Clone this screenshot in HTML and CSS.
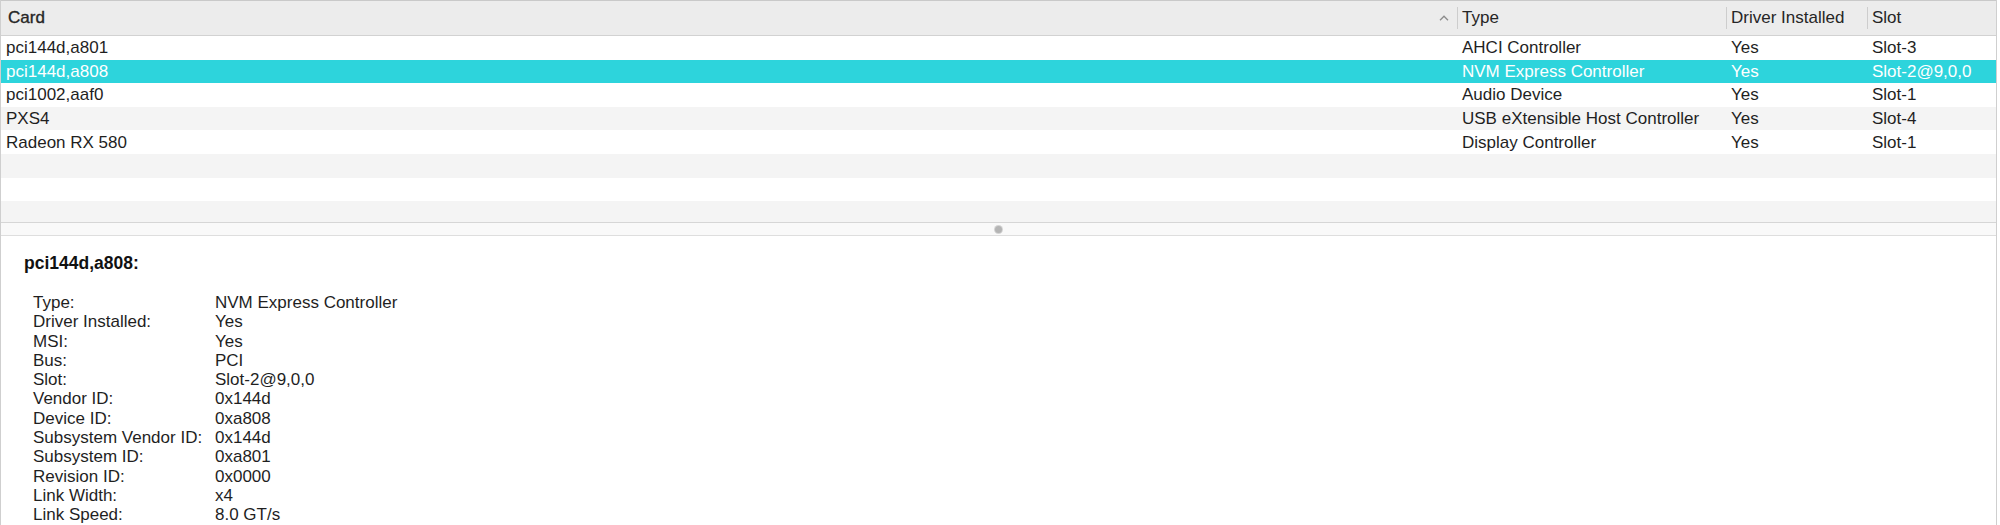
FILE: index.html
```html
<!DOCTYPE html>
<html lang="en">
<head>
<meta charset="utf-8">
<title>PCI Cards</title>
<link rel="stylesheet" href="styles.css">
</head>
<body>
<div class="window">
  <div class="table">
    <div class="row header">
      <div class="cell c-card"><span class="sorted">Card</span>
        <svg class="sort-arrow" width="10" height="6" viewBox="0 0 10 6"><path d="M1 5.2 L5 1.2 L9 5.2" fill="none" stroke="#8c8c8c" stroke-width="1.3"/></svg>
      </div>
      <div class="cell c-type"><span class="sep"></span>Type</div>
      <div class="cell c-drv"><span class="sep"></span>Driver Installed</div>
      <div class="cell c-slot"><span class="sep"></span>Slot</div>
    </div>
    <div class="row">
      <div class="cell c-card">pci144d,a801</div>
      <div class="cell c-type">AHCI Controller</div>
      <div class="cell c-drv">Yes</div>
      <div class="cell c-slot">Slot-3</div>
    </div>
    <div class="row alt selected">
      <div class="cell c-card">pci144d,a808</div>
      <div class="cell c-type">NVM Express Controller</div>
      <div class="cell c-drv">Yes</div>
      <div class="cell c-slot">Slot-2@9,0,0</div>
    </div>
    <div class="row">
      <div class="cell c-card">pci1002,aaf0</div>
      <div class="cell c-type">Audio Device</div>
      <div class="cell c-drv">Yes</div>
      <div class="cell c-slot">Slot-1</div>
    </div>
    <div class="row alt">
      <div class="cell c-card">PXS4</div>
      <div class="cell c-type">USB eXtensible Host Controller</div>
      <div class="cell c-drv">Yes</div>
      <div class="cell c-slot">Slot-4</div>
    </div>
    <div class="row">
      <div class="cell c-card">Radeon RX 580</div>
      <div class="cell c-type">Display Controller</div>
      <div class="cell c-drv">Yes</div>
      <div class="cell c-slot">Slot-1</div>
    </div>
    <div class="row alt empty"></div>
    <div class="row empty"></div>
    <div class="row alt empty"></div>
  </div>
  <div class="splitter"><span class="dot"></span></div>
  <div class="detail">
    <div class="title">pci144d,a808:</div>
    <div class="props">
      <div class="k">Type:</div><div class="v">NVM Express Controller</div>
      <div class="k">Driver Installed:</div><div class="v">Yes</div>
      <div class="k">MSI:</div><div class="v">Yes</div>
      <div class="k">Bus:</div><div class="v">PCI</div>
      <div class="k">Slot:</div><div class="v">Slot-2@9,0,0</div>
      <div class="k">Vendor ID:</div><div class="v">0x144d</div>
      <div class="k">Device ID:</div><div class="v">0xa808</div>
      <div class="k">Subsystem Vendor ID:</div><div class="v">0x144d</div>
      <div class="k">Subsystem ID:</div><div class="v">0xa801</div>
      <div class="k">Revision ID:</div><div class="v">0x0000</div>
      <div class="k">Link Width:</div><div class="v">x4</div>
      <div class="k">Link Speed:</div><div class="v">8.0 GT/s</div>
    </div>
  </div>
</div>
</body>
</html>
```

FILE: styles.css
```css
html, body {
  margin: 0;
  padding: 0;
  background: #ffffff;
}

body {
  font-family: "Liberation Sans", Arial, sans-serif;
  font-size: 17px;
  color: #1f1f1f;
  width: 2000px;
  height: 525px;
  overflow: hidden;
}

.window {
  width: 1997px;
  height: 525px;
  box-sizing: border-box;
  border-left: 1px solid #cfcfcf;
  border-right: 1px solid #cfcfcf;
  display: flex;
  flex-direction: column;
}

.table {
  height: 222px;
  overflow: hidden;
  flex: none;
}

.row {
  display: grid;
  grid-template-columns: 1456px 269px 141px 1fr;
  height: 23.6px;
  align-items: center;
  background: #ffffff;
}

.row.alt {
  background: #f4f4f4;
}

.row.selected {
  background: #2dd4dc;
  color: #ffffff;
}

.row.header {
  height: 36px;
  box-sizing: border-box;
  background: #ececec;
  border-top: 1px solid #c9c9c9;
  border-bottom: 1px solid #d2d2d2;
  color: #262626;
}

.cell {
  padding-left: 5px;
  white-space: nowrap;
  overflow: hidden;
  line-height: 20px;
  padding-top: 1px;
}

.header .cell {
  position: relative;
  display: flex;
  align-items: center;
  height: 100%;
  padding-top: 0;
}

.header .c-card {
  padding-left: 7px;
}

.sorted {
  -webkit-text-stroke: 0.35px #262626;
}

.sort-arrow {
  position: absolute;
  right: 8px;
  top: 14px;
}

.sep {
  position: absolute;
  left: 0;
  top: 6px;
  bottom: 6px;
  width: 1px;
  background: #cdcdcd;
}

.splitter {
  height: 14px;
  flex: none;
  box-sizing: border-box;
  border-top: 1px solid #d6d6d6;
  border-bottom: 1px solid #dedede;
  background: #f9f9f9;
  display: flex;
  align-items: center;
  justify-content: center;
}

.dot {
  width: 7px;
  height: 7px;
  border-radius: 50%;
  background: #b4b4b4;
  box-shadow: 0 0 0 1px #d4d4d4;
}

.detail {
  flex: 1;
  background: #ffffff;
  padding: 18px 0 0 23px;
}

.title {
  font-weight: bold;
  font-size: 17.5px;
  line-height: 19px;
  color: #111111;
}

.props {
  margin-top: 20px;
  margin-left: 9px;
  display: grid;
  grid-template-columns: 182px 1fr;
  line-height: 19.3px;
  color: #1f1f1f;
}
```
